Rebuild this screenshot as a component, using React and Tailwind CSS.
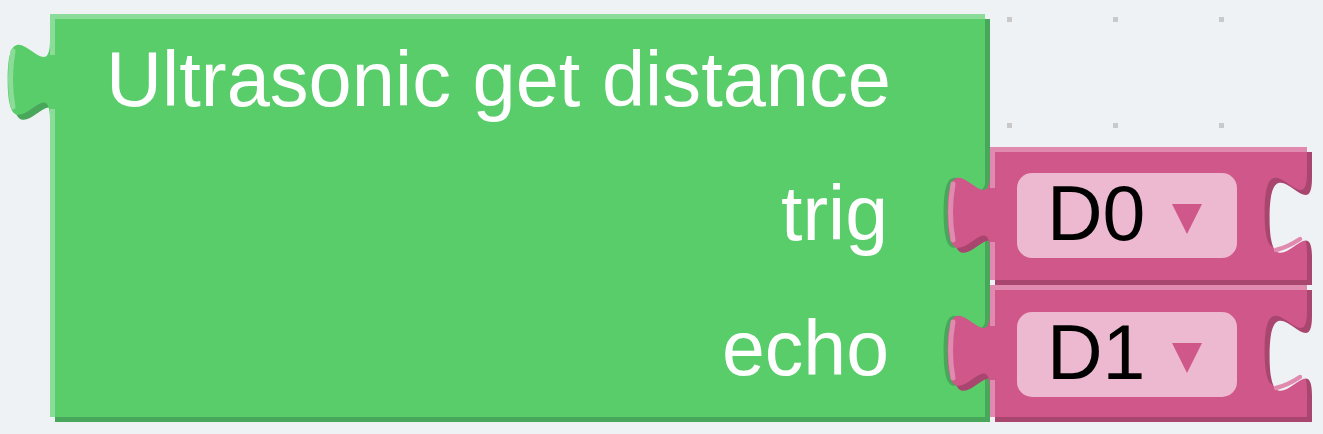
import React from 'react';

const GREEN = '#58cd6a';
const GREEN_LIGHT = '#8bdc98';
const GREEN_DARK = '#48a75a';
const PINK = '#cf5789';
const PINK_LIGHT = '#df8aae';
const PINK_DARK = '#a9466f';
const BG = '#eff2f4';

// puzzle tab outline (Blockly style, scaled); edge at x=e, starts at y=t
const S = 5.3;
const tabPath = (e, t) =>
  `M${e},${t} C${e},${t + 10 * S} ${e - 8 * S},${t - 8 * S} ${e - 8 * S},${t + 7.5 * S} ` +
  `C${e - 8 * S},${t + 23 * S} ${e},${t + 5 * S} ${e},${t + 15 * S} Z`;

const OutputTab = ({ main, light, dark, behind }) => (
  <svg width="60" height="100" viewBox="0 0 60 100" className="absolute left-[-53px] top-[15px] overflow-visible">
    {behind && <path d={tabPath(44, 6)} fill={behind} />}
    <path d={tabPath(53, 11)} fill={dark} />
    <rect x="48" y="0" width="5" height="100" fill={light} />
    <path d={tabPath(48, 6)} fill={main} />
    <rect x="47.5" y="21" width="6" height="54" fill={main} />
    <path d="M11,17 Q6,45 11,73" stroke={light} strokeWidth="5" fill="none" strokeLinecap="round" />
  </svg>
);

const Notch = () => (
  <svg width="60" height="100" viewBox="0 0 60 100" className="absolute left-[264px] top-[15px]">
    <path d={tabPath(48, 6)} fill={PINK_DARK} />
    <path d={tabPath(53, 11)} fill={BG} />
    <path d="M17,83 Q29,80 41,72" stroke={PINK_LIGHT} strokeWidth="4.5" fill="none" strokeLinecap="round" />
  </svg>
);

const PinBlock = ({ label, height, top }) => (
  <div
    className={`relative w-[317px] border-t-[5px] border-l-[5px] border-[#df8aae] bg-[#cf5789] shadow-[5px_5px_0_#a9466f] ${height}`}
  >
    <OutputTab main={PINK} light={PINK_LIGHT} dark={PINK_DARK} behind={GREEN_DARK} />
    <Notch />
    <div className={`ml-[22px] flex h-[85px] w-[220px] items-start rounded-[15px] bg-[#edb9d0] pl-[30px] pt-[2px] ${top}`}>
      <span className="text-[77px] leading-none text-black">{label}</span>
      <svg className="ml-[27px] mt-[29px]" width="30" height="30" viewBox="0 0 30 30">
        <polygon points="0,0 30,0 15,30" fill={PINK} />
      </svg>
    </div>
  </div>
);

export default function App() {
  return (
    <div className="relative h-[434px] w-full overflow-hidden bg-[#eff2f4] font-['Liberation_Sans',Arial,sans-serif]">
      {/* workspace grid */}
      <svg className="absolute inset-0" width="1323" height="434">
        <defs>
          <pattern id="grid" width="106" height="106" patternUnits="userSpaceOnUse">
            <rect x="53" y="17" width="5" height="5" fill="#c9c9c9" />
          </pattern>
        </defs>
        <rect width="100%" height="100%" fill="url(#grid)" />
      </svg>

      <div className="absolute left-[50px] top-[14px] flex items-start">
        {/* Ultrasonic block */}
        <div className="relative h-[403px] w-[935px] shrink-0 border-t-[5px] border-l-[5px] border-[#8bdc98] bg-[#58cd6a] shadow-[5px_5px_0_#48a75a] text-[77px] leading-none text-white">
          <OutputTab main={GREEN} light={GREEN_LIGHT} dark={GREEN_DARK} />
          <div className="whitespace-nowrap pl-[51px] pt-[22px] text-[77.6px]">Ultrasonic get distance</div>
          <div className="mt-[56px] pr-[97px] text-right">trig</div>
          <div className="mt-[58px] pr-[96px] text-right">echo</div>
        </div>

        {/* pin blocks */}
        <div className="ml-[5px] mt-[133px] flex flex-col gap-[5px]">
          <PinBlock label="D0" height="h-[133px]" top="mt-[21px]" />
          <PinBlock label="D1" height="h-[132px]" top="mt-[22px]" />
        </div>
      </div>
    </div>
  );
}
